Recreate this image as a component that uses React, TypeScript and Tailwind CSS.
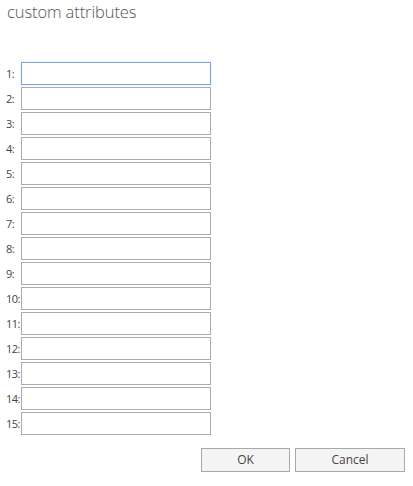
const fields = Array.from({ length: 15 }, (_, i) => i + 1);

export default function App() {
  return (
    <div className="w-[413px] h-[486px] bg-white font-['Open_Sans',sans-serif] text-[#444]">
      <div className="pl-[7px] h-[62px]">
        <h1 className="text-[16.5px] font-light leading-[24px] tracking-[-0.1px] text-[#555]">custom attributes</h1>
      </div>

      <div className="flex flex-col gap-[2px] pl-[6px]">
        {fields.map((n) => (
          <div key={n} className="flex items-center">
            <label className="w-[15px] shrink-0 whitespace-nowrap text-[11px] leading-none tracking-[-0.6px]">
              {n}:
            </label>
            <input
              type="text"
              autoFocus={n === 1}
              className={
                n === 1
                  ? "w-[190px] h-[23px] border border-[#7aa7e6] shadow-[0_0_1px_#a8c8f0] outline-none px-1 text-[12px]"
                  : "w-[190px] h-[23px] border border-[#ababab] outline-none px-1 text-[12px]"
              }
            />
          </div>
        ))}
      </div>

      <div className="flex justify-end gap-[5px] pr-[8px] mt-[13px]">
        <button className="w-[89px] h-[24px] bg-[#f4f4f4] border border-[#a3acac] text-[12px] text-[#444]">
          OK
        </button>
        <button className="w-[110px] h-[24px] bg-[#f4f4f4] border border-[#a3acac] text-[12px] text-[#444]">
          Cancel
        </button>
      </div>
    </div>
  );
}
